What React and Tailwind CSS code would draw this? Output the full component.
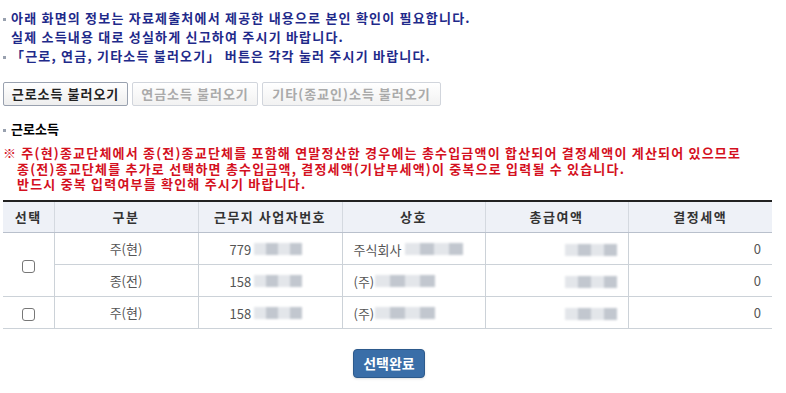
import React from "react";

const FONT = { fontFamily: '"Noto Sans CJK KR", "Noto Sans", sans-serif' };

// 흐림 처리된 값 (개인정보 마스킹)
function Blur({ w = 60, shades = ["bg-gray-300", "bg-gray-400", "bg-gray-300", "bg-gray-400"] }) {
    return (
        <span className="inline-flex items-center align-middle blur-[1px]" style={{ width: w }}>
            {shades.map((s, i) => (
                <span key={i} className={`${s} h-[12px] flex-1 opacity-60`} />
            ))}
        </span>
    );
}

function Bullet() {
    return <span className="inline-block w-[3px] h-[3px] bg-gray-400 mr-[5px] align-middle" />;
}

const rows = [
    { kind: "주(현)", biz: "779", name: "주식회사", check: true, span: 2 },
    { kind: "종(전)", biz: "158", name: "(주)" },
    { kind: "주(현)", biz: "158", name: "(주)", check: true, span: 1 },
];

export default function App() {
    return (
        <div className="w-[786px] h-[393px] bg-white overflow-hidden pl-[3px] pt-[8px]" style={FONT}>
            {/* 안내 문구 */}
            <div className="text-[13px] font-bold leading-[19px] text-[#1f2a8a] tracking-[1.2px]">
                <div><Bullet />아래 화면의 정보는 자료제출처에서 제공한 내용으로 본인 확인이 필요합니다.</div>
                <div className="pl-[8px]">실제 소득내용 대로 성실하게 신고하여 주시기 바랍니다.</div>
                <div><Bullet />「근로, 연금, 기타소득 불러오기」 버튼은 각각 눌러 주시기 바랍니다.</div>
            </div>

            {/* 불러오기 버튼 */}
            <div className="flex gap-[4px] mt-[17px] text-[13px] font-bold tracking-[1px]">
                <button className="h-[24px] w-[125px] border border-gray-400 rounded-[2px] bg-gradient-to-b from-white to-[#eeeeee] text-[#222]">근로소득 불러오기</button>
                <button className="h-[24px] w-[126px] border border-gray-300 rounded-[2px] bg-gradient-to-b from-white to-[#f2f2f2] text-[#aaa]">연금소득 불러오기</button>
                <button className="h-[24px] w-[179px] border border-gray-300 rounded-[2px] bg-gradient-to-b from-white to-[#f2f2f2] text-[#aaa]">기타(종교인)소득 불러오기</button>
            </div>

            <div className="mt-[14px] text-[13px] font-bold text-black leading-[18px]"><Bullet />근로소득</div>

            {/* 주의 문구 */}
            <div className="mt-[7px] text-[13px] font-bold text-[#d4101e] leading-[15.5px] tracking-[1.2px] whitespace-nowrap">
                <div>※ 주(현)종교단체에서 종(전)종교단체를 포함해 연말정산한 경우에는 총수입금액이 합산되어 결정세액이 계산되어 있으므로</div>
                <div className="pl-[14px]">종(전)종교단체를 추가로 선택하면 총수입금액, 결정세액(기납부세액)이 중복으로 입력될 수 있습니다.</div>
                <div className="pl-[14px]">반드시 중복 입력여부를 확인해 주시기 바랍니다.</div>
            </div>

            {/* 표 */}
            <table className="mt-[8px] w-[769px] border-collapse border-t-2 border-[#222] text-[13px] table-fixed">
                <colgroup>
                    <col className="w-[51px]" />
                    <col className="w-[144px]" />
                    <col className="w-[144px]" />
                    <col className="w-[143px]" />
                    <col className="w-[143px]" />
                    <col className="w-[144px]" />
                </colgroup>
                <thead>
                    <tr className="h-[32px] bg-[#eef1f7] text-[#333] tracking-[1.5px]">
                        {["선택", "구분", "근무지 사업자번호", "상호", "총급여액", "결정세액"].map((h, i) => (
                            <th key={h} className={`font-bold border-b border-[#b9c0cc] ${i > 0 ? "border-l border-l-[#d4d9e0]" : ""}`}>{h}</th>
                        ))}
                    </tr>
                </thead>
                <tbody className="text-[#555]">
                    {rows.map((r, i) => (
                        <tr key={i} className="h-[32px]">
                            {r.check && (
                                <td rowSpan={r.span} className="border-b border-[#ccd2d8] text-center align-middle">
                                    <span className="inline-block w-[13px] h-[13px] border border-[#777] rounded-[3px] bg-white align-middle" />
                                </td>
                            )}
                            <td className="border-b border-l border-[#ccd2d8] text-center">{r.kind}</td>
                            <td className="border-b border-l border-[#ccd2d8] pl-[31px]">
                                <span className="align-middle">{r.biz}</span>
                                <span className="ml-[3px]"><Blur w={48} /></span>
                            </td>
                            <td className="border-b border-l border-[#ccd2d8] pl-[11px] whitespace-nowrap">
                                <span className="align-middle">{r.name}</span>
                                <span className={r.name === "(주)" ? "ml-[1px]" : "ml-[4px]"}><Blur w={r.name === "(주)" ? 60 : 58} /></span>
                            </td>
                            <td className="border-b border-l border-[#ccd2d8] text-right pr-[11px]">
                                <Blur w={52} />
                            </td>
                            <td className="border-b border-l border-[#ccd2d8] text-right pr-[11px]">0</td>
                        </tr>
                    ))}
                </tbody>
            </table>

            {/* 선택완료 */}
            <div className="flex justify-center w-[772px] mt-[20px]">
                <button className="h-[29px] px-[9px] rounded-[4px] bg-[#3a6ea8] border border-[#2d5a8c] text-white text-[14px] font-bold shadow-sm">선택완료</button>
            </div>
        </div>
    );
}
